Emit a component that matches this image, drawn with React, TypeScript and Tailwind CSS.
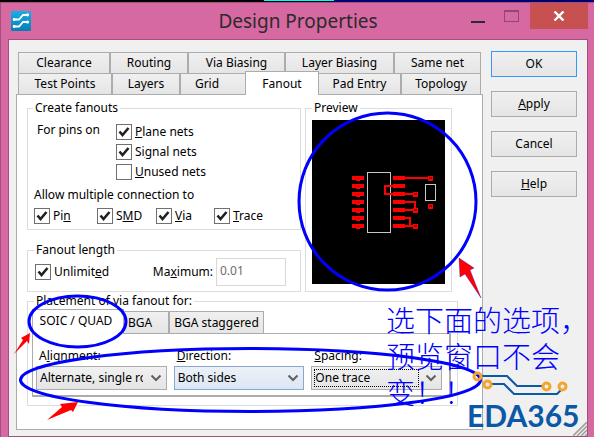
import React from 'react';
import { clsx } from 'clsx';

const pinRows = [58, 66, 74, 82, 90, 98, 106];

interface TabProps {
  className?: string;
  active?: boolean;
  children: React.ReactNode;
}

const Tab: React.FC<TabProps> = ({ className, active, children }) => (
  <button
    type="button"
    role="tab"
    aria-selected={!!active}
    className={clsx(
      'min-w-0 whitespace-nowrap border border-[#acacac] text-center',
      active ? 'relative z-10 border-b-0 bg-white' : 'bg-linear-to-b from-[#f0f0f0] to-[#e5e5e5]',
      className,
    )}
  >
    {children}
  </button>
);

interface CheckProps {
  id: string;
  checked?: boolean;
  children: React.ReactNode;
}

const Check: React.FC<CheckProps> = ({ id, checked, children }) => (
  <div className="flex h-5 items-center gap-[3px] whitespace-nowrap">
    <span className="grid size-4 shrink-0">
      <input
        id={id}
        type="checkbox"
        defaultChecked={checked}
        className="peer col-start-1 row-start-1 size-4 appearance-none border border-[#707070] bg-white"
      />
      <svg viewBox="0 0 16 16" className="pointer-events-none invisible col-start-1 row-start-1 size-4 peer-checked:visible">
        <path d="M3.5 7.5L6.5 11L12.5 4" fill="none" stroke="#212121" strokeWidth="2.6" />
      </svg>
    </span>
    <label htmlFor={id}>{children}</label>
  </div>
);

interface DropDownProps {
  id: string;
  label: React.ReactNode;
  value: string;
  look?: 'plain' | 'hot' | 'focused';
}

const DropDown: React.FC<DropDownProps> = ({ id, label, value, look = 'plain' }) => (
  <div className="min-w-0 flex-1">
    <label htmlFor={id} className="block px-[3px]">{label}</label>
    <div
      className={clsx(
        'mt-[2px] grid h-6 border p-[2px]',
        look === 'hot'
          ? 'border-[#8aa8cc] bg-linear-to-b from-[#ecf1f8] to-[#dce6f3]'
          : 'border-[#acacac] bg-linear-to-b from-[#f0f0f0] to-[#e5e5e5]',
      )}
    >
      <div className={clsx('col-start-1 row-start-1 mr-5 border', look === 'focused' ? 'border-dotted border-black' : 'border-transparent')}>
        <select id={id} className="block h-4 w-full appearance-none overflow-hidden bg-transparent leading-4 outline-none">
          <option>{value}</option>
        </select>
      </div>
      <svg viewBox="0 0 12 8" className="pointer-events-none col-start-1 row-start-1 mr-[2px] h-2 w-3 self-center justify-self-end">
        <path d="M1.5 1.5L6 6L10.5 1.5" fill="none" stroke="#606060" strokeWidth="2" />
      </svg>
    </div>
  </div>
);

const Preview: React.FC = () => (
  <svg viewBox="0 0 133 164" className="h-[164px] w-full bg-black" shapeRendering="crispEdges">
    {pinRows.map((y) => (
      <g key={y} fill="#ff0000">
        <rect x="40" y={y - 2} width="12" height="4" />
        <rect x="44" y={y + 2} width="4" height="1" />
        <rect x="46" y={y} width="1" height="1" fill="#900000" />
        <rect x="81" y={y - 2} width="12" height="4" />
      </g>
    ))}
    <g fill="none" stroke="#c8c8c8">
      <rect x="55.5" y="52.5" width="23" height="60" />
      <rect x="113.5" y="64.5" width="10" height="16" />
    </g>
    <g fill="none" stroke="#ff0000" strokeWidth="2">
      <path d="M93 58H118M81 66H73V74H81M93 74H103M93 82H103V90H93M93 98H98V106M93 106H103" />
    </g>
    {[[118, 58], [118, 86], [103, 74], [103, 90], [103, 106]].map(([x, y]) => (
      <g key={`${x}-${y}`}>
        <rect x={x - 2} y={y - 2} width="5" height="5" fill="#ff0000" />
        <rect x={x - 1} y={y - 1} width="3" height="2" fill="#900000" />
      </g>
    ))}
  </svg>
);

const TitleBar: React.FC = () => (
  <header className="flex h-9 items-start">
    <svg viewBox="0 0 20 20" className="mt-2 ml-[3px] size-5 shrink-0">
      <defs>
        <linearGradient id="logo" x1="0" y1="0" x2="0" y2="1">
          <stop offset="0" stopColor="#18aeea" />
          <stop offset="1" stopColor="#087cb4" />
        </linearGradient>
      </defs>
      <rect width="20" height="20" rx="1" fill="url(#logo)" />
      <g fill="none" stroke="#fff" strokeWidth="1.8">
        <path d="M2 8.5H8L12 4H17M2 15.5H8L12 11H17" />
      </g>
      <g fill="#fff">
        <circle cx="3.2" cy="8.5" r="1.4" />
        <circle cx="16.5" cy="3.8" r="1.6" />
        <circle cx="3.2" cy="15.5" r="1.4" />
        <circle cx="16.5" cy="11" r="1.6" />
      </g>
    </svg>
    <h1 className="flex-1 pt-1 pl-[102px] text-center text-[19px] leading-7 whitespace-nowrap text-[#2b2b2b]">
      Design Properties
    </h1>
    <div className="flex">
      <button type="button" aria-label="Minimize" className="flex h-[26px] w-[30px] items-center justify-center">
        <svg viewBox="0 0 14 12" className="mt-[10px] h-3 w-[14px]"><path d="M0 7H14" stroke="#2b2b2b" strokeWidth="2" /></svg>
      </button>
      <button type="button" aria-label="Maximize" className="flex h-[26px] w-[37px] items-center justify-center">
        <svg viewBox="0 0 15 12" className="h-3 w-[15px]" shapeRendering="crispEdges">
          <path d="M0 1.5H15M0.5 0V11.5H14.5V0M0 0.5H15" fill="none" stroke="#8c4a70" />
        </svg>
      </button>
      <button type="button" aria-label="Close" className="flex h-[26px] w-[58px] items-center justify-center bg-[#c75050]">
        <svg viewBox="0 0 12 10" className="h-[10px] w-3"><path d="M1.5 0.5L10.5 9.5M10.5 0.5L1.5 9.5" stroke="#fff" strokeWidth="2.4" /></svg>
      </button>
    </div>
  </header>
);

// Hand-drawn marks and the board logo, laid over the dialog
const Annotations: React.FC = () => (
  <div className="pointer-events-none absolute top-0 left-0 z-20 h-[437px] w-[594px]">
    <svg viewBox="0 0 594 437" className="absolute inset-0 size-full">
      <g fill="none" stroke="#0000ff" strokeWidth="3">
        <circle cx="387.5" cy="201.5" r="88.5" />
        <ellipse cx="77.5" cy="321.5" rx="48.5" ry="25.5" />
        <ellipse cx="250.5" cy="380" rx="230" ry="31.5" />
      </g>
      <g fill="#ff0000">
        <path d="M459 258L474 268L470 270L481 298L465 274L460 277Z" stroke="#3010c0" strokeWidth="0.4" />
        <path d="M30 333L21 338L23 340L14 354L27 341L29 344Z" />
        <path d="M78 402L60 404L62 407L47 420L71 410L73 412Z" />
      </g>
      <g fill="none" stroke="#0a58a6" strokeWidth="2">
        <path d="M481 376H507L517 386H543" />
        <path d="M491 384H504L514 394H557L561 390" />
      </g>
      <g fill="none" stroke="#f5a42c" strokeWidth="3">
        <circle cx="477.5" cy="376.5" r="3.5" />
        <circle cx="487.5" cy="384.5" r="3.5" />
        <circle cx="546.5" cy="386.5" r="3.5" />
        <circle cx="562.5" cy="386.5" r="3.5" />
      </g>
    </svg>
    <p className="absolute top-[301px] left-[386px] font-['Noto_Sans_CJK_SC',sans-serif] text-[29px] leading-9 font-light whitespace-nowrap text-[#0000ff]">
      选下面的选项，<br />预览窗口不会<br />变！！
    </p>
    <p className="absolute top-[399px] left-[467px] font-[Lato,sans-serif] text-[30px] leading-8 font-bold text-[#0a58a6]">EDA365</p>
  </div>
);

const commandButton = 'h-[26px] border bg-linear-to-b from-[#f0f0f0] to-[#e5e5e5] text-center';
const group = 'min-w-0 border border-[#dcdcdc]';
const legend = 'ml-[6px] px-[2px] leading-4 whitespace-nowrap';

export default function App() {
  return (
    <div className="relative overflow-hidden bg-black font-['Noto_Sans',sans-serif] text-[12px] leading-4 text-black">
      <div className="flex h-[2px]">
        <div className="w-[264px]" />
        <div className="h-px w-[70px] bg-[#00ffff]" />
        <div className="flex-1 bg-[#000070]" />
      </div>
      <div className="border-t border-l border-[#a4507c] bg-[#d668a2] pr-[6px] pl-[7px]">
        <TitleBar />
        <main className="flex gap-2 border border-[#a4507c] bg-[#f0f0f0] pt-[11px] pr-[10px] pb-[6px] pl-[7px]">
          <div className="flex min-w-0 flex-1 flex-col">
            <div role="tablist" className="mx-[2px] mt-px">
              <div className="flex h-[21px]">
                <Tab className="grow basis-[92px] border-b-0">Clearance</Tab>
                <Tab className="grow basis-[78px] border-b-0">Routing</Tab>
                <Tab className="grow basis-[97px] border-b-0">Via Biasing</Tab>
                <Tab className="grow basis-[109px] border-b-0">Layer Biasing</Tab>
                <Tab className="grow basis-[87px] border-b-0">Same net</Tab>
              </div>
              <div className="flex h-[21px]">
                <Tab className="grow basis-[94px] border-b-0">Test Points</Tab>
                <Tab className="grow basis-[68px] border-b-0">Layers</Tab>
                <Tab className="grow basis-[65px] border-r-0 border-b-0 pr-3">Grid</Tab>
                <Tab active className="-mt-[2px] -mb-px grow basis-[74px]">Fanout</Tab>
                <Tab className="grow basis-[82px] border-b-0 border-l-0">Pad Entry</Tab>
                <Tab className="grow basis-[80px] border-b-0">Topology</Tab>
              </div>
            </div>

            <div role="tabpanel" className="border border-[#acacac] bg-white pt-[5px] pr-[24px] pb-[23px] pl-[10px]">
              <div className="mr-[6px] flex gap-1">
                <div className="flex min-w-0 flex-1 flex-col gap-3">
                  <fieldset className={clsx(group, 'h-[130px] pr-2 pl-[6px]')}>
                    <legend className="-ml-px px-[2px] leading-4 whitespace-nowrap">Create fanouts</legend>
                    <div className="flex pt-[6px]">
                      <p className="w-[82px] pl-[3px]">For pins on</p>
                      <div>
                        <Check id="plane" checked><u>P</u>lane nets</Check>
                        <Check id="signal" checked>Si<u>g</u>nal nets</Check>
                        <Check id="unused"><u>U</u>nused nets</Check>
                      </div>
                    </div>
                    <p className="mt-[5px]">Allow multiple connection to</p>
                    <div className="mt-[3px] grid grid-cols-[63px_59px_58px_auto]">
                      <Check id="pin" checked>Pi<u>n</u></Check>
                      <Check id="smd" checked>S<u>M</u>D</Check>
                      <Check id="via" checked><u>V</u>ia</Check>
                      <Check id="trace" checked><u>T</u>race</Check>
                    </div>
                  </fieldset>
                  <fieldset className={clsx(group, 'h-[50px]')}>
                    <legend className={legend}>Fanout length</legend>
                    <div className="flex items-center pr-[14px] pl-[7px]">
                      <Check id="unlimited" checked>Unlimit<u>e</u>d</Check>
                      <label htmlFor="maximum" className="ml-auto">Ma<u>x</u>imum:</label>
                      <input
                        id="maximum"
                        disabled
                        defaultValue="0.01"
                        className="ml-[3px] h-7 w-[70px] border border-[#d9d9d9] bg-white px-[3px] pb-1 text-[#6d6d6d]"
                      />
                    </div>
                  </fieldset>
                </div>
                <fieldset className={clsx(group, 'w-[147px] px-[6px]')}>
                  <legend className="px-[2px] leading-4 whitespace-nowrap">Preview</legend>
                  <div className="pt-1"><Preview /></div>
                </fieldset>
              </div>

              <fieldset className={clsx(group, 'mt-px pr-[6px] pb-2 pl-1')}>
                <legend className="ml-[2px] px-[2px] leading-4 whitespace-nowrap">Placement of via fanout for:</legend>
                <div role="tablist" className="flex h-6 items-end">
                  <Tab active className="-mb-px h-[25px] w-[92px] pr-1 pb-[2px]">SOIC / QUAD</Tab>
                  <Tab className="h-[22px] w-[45px] border-b-0 border-l-0 pr-3">BGA</Tab>
                  <Tab className="h-[22px] w-[95px] border-b-0">BGA staggered</Tab>
                </div>
                <div className="flex gap-[7px] border border-r-2 border-b-2 border-[#acacac] pt-[14px] pr-[7px] pb-[5px] pl-[3px]">
                  <DropDown id="alignment" label={<>A<u>l</u>ignment:</>} value="Alternate, single row" />
                  <DropDown id="direction" label={<><u>D</u>irection:</>} value="Both sides" look="hot" />
                  <DropDown id="spacing" label={<><u>S</u>pacing:</>} value="One trace" look="focused" />
                </div>
              </fieldset>
            </div>
          </div>

          <div className="flex w-[86px] shrink-0 flex-col gap-[14px]">
            <button type="button" className={clsx(commandButton, 'border-[#3399ff]')}>OK</button>
            <button type="button" className={clsx(commandButton, 'border-[#acacac]')}><u>A</u>pply</button>
            <button type="button" className={clsx(commandButton, 'border-[#acacac]')}>Cancel</button>
            <button type="button" className={clsx(commandButton, 'border-[#acacac]')}><u>H</u>elp</button>
            <svg viewBox="0 0 14 14" className="mt-auto -mr-[10px] -mb-[6px] size-[14px] self-end">
              <path d="M0 14L14 0M4 14L14 4M8 14L14 8M12 14L14 12" stroke="#a0a0a0" strokeWidth="1.6" />
            </svg>
          </div>
        </main>
      </div>
      <Annotations />
    </div>
  );
}
